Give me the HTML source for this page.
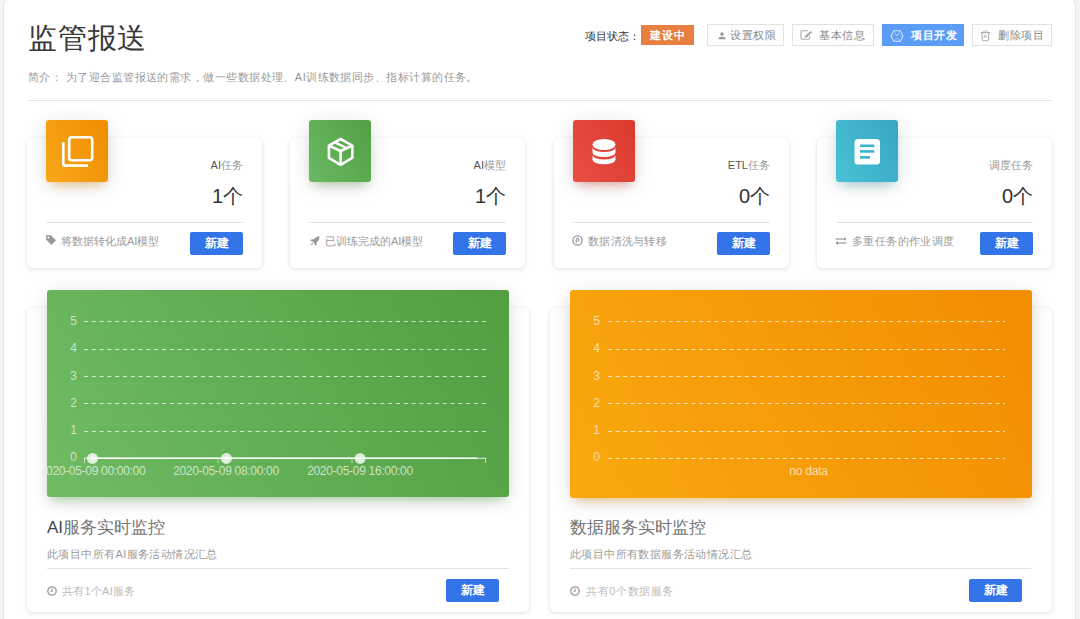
<!DOCTYPE html>
<html><head><meta charset="utf-8">
<style>
*{box-sizing:border-box;margin:0;padding:0}
html,body{width:1080px;height:619px;overflow:hidden;background:#f5f5f5;font-family:"Liberation Sans",sans-serif;color:#333}
.abs{position:absolute}
svg{display:block}
#outer{position:absolute;left:4px;top:-1px;width:1071px;height:640px;background:#fff;border-radius:6px;box-shadow:0 0 0 1px #e6e6e6,0 0 2px rgba(0,0,0,.06)}
.title{left:28px;top:19px;letter-spacing:0.8px;font-size:29px;line-height:38px;color:#383838;white-space:nowrap}
.intro{left:28px;top:69px;letter-spacing:0.45px;font-size:11px;line-height:16px;color:#999;white-space:nowrap}
.hr1{left:28px;top:100px;width:1024px;height:1px;background:#e5e5e5}
.status{left:585px;top:28px;font-size:11px;line-height:16px;color:#333;white-space:nowrap}
.badge{left:641px;top:25px;width:53px;height:20px;background:#e67f40;color:#fff;font-weight:bold;font-size:11px;letter-spacing:0.6px;text-indent:0.6px;line-height:21px;text-align:center}
.btn{top:24px;height:22px;border:1px solid #e2e2e2;background:#fff;color:#888;letter-spacing:0.6px;font-size:11px;line-height:20px;white-space:nowrap}
.btn.blue{background:#5b9cf6;border-color:#5b9cf6;color:#fff;font-weight:bold}
.btn svg{position:absolute}
.btn span{position:absolute;top:0}
.card{background:#fff;border-radius:5px;box-shadow:0 1px 4px rgba(0,0,0,.14)}
.icon{width:62px;height:62px;border-radius:3px}
.icon svg{position:absolute}
.lab{font-size:11px;line-height:14px;color:#999;text-align:right;white-space:nowrap}
.lab b{font-weight:normal;color:#555}
.num{font-size:20px;line-height:24px;color:#333;text-align:right;white-space:nowrap}
.hr{height:1px;background:#e3e3e3}
.foot{font-size:11px;line-height:14px;color:#999;white-space:nowrap}
.nb{width:53px;height:22.6px;background:#3375e8;border-radius:2px;color:#fff;font-weight:bold;font-size:12px;line-height:23px;text-align:center}
.chart{border-radius:3px;overflow:hidden}
.chart svg{position:absolute;left:0;top:0}
.ctitle{font-size:17px;line-height:22px;color:#747474;white-space:nowrap}
.ctitle b{font-weight:normal;color:#3c4858}
.csub{font-size:11px;line-height:14px;color:#9a9a9a;letter-spacing:0.4px;white-space:nowrap}
.fi{position:absolute}
</style></head><body>
<div id="outer"></div>
<div class="abs title">监管报送</div>
<div class="abs intro">简介： 为了迎合监管报送的需求，做一些数据处理、AI训练数据同步、指标计算的任务。</div>
<div class="abs hr1"></div>

<div class="abs status">项目状态：</div>
<div class="abs badge">建设中</div>
<div class="abs btn" style="left:707px;width:77px">
 <svg style="left:10px;top:7px" width="8" height="8" viewBox="0 0 8 8"><circle cx="4" cy="2.1" r="1.8" fill="#999"/><path d="M0.3 7.2 Q0.3 4.8 4 4.8 Q7.7 4.8 7.7 7.2Z" fill="#999"/></svg>
 <span style="left:22px">设置权限</span></div>
<div class="abs btn" style="left:792px;width:82px">
 <svg style="left:7px;top:4px" width="13" height="12" viewBox="0 0 13 12"><path d="M8 1.8H2.2Q1 1.8 1 3V9.1Q1 10.3 2.2 10.3H8.3Q9.5 10.3 9.5 9.1V7.2" fill="none" stroke="#aaa" stroke-width="1.1"/><path d="M4.6 9L5.1 7L10.6 2L12.1 3.5L6.6 8.5Z" fill="#a5a5a5"/></svg>
 <span style="left:26px">基本信息</span></div>
<div class="abs btn blue" style="left:882px;width:82px">
 <svg style="left:7px;top:5px" width="14" height="12" viewBox="0 0 14 12"><path d="M3.8 0.7H10.2L13.2 6L10.2 11.3H3.8L0.8 6Z" fill="none" stroke="#e8f0ff" stroke-width="0.9"/><path d="M3.8 0.7L7 6L10.2 0.7M0.8 6H4.2M13.2 6H9.8M3.8 11.3L5.5 8.6M10.2 11.3L8.5 8.6M5.5 8.6H8.5M4.5 3.6L7 6L9.5 3.6" fill="none" stroke="rgba(235,242,255,.55)" stroke-width="0.8"/></svg>
 <span style="left:28px">项目开发</span></div>
<div class="abs btn" style="left:972px;width:80px">
 <svg style="left:7px;top:5px" width="12" height="12" viewBox="0 0 12 12"><path d="M0.8 2.6H10.4" stroke="#aaa" stroke-width="1.1"/><path d="M3 2.4Q3.2 0.7 5.3 0.7Q7.4 0.7 7.6 2.4" fill="none" stroke="#b5b5b5" stroke-width="0.9"/><path d="M1.9 2.8L2.3 10Q2.4 10.8 3.2 10.8H7.6Q8.4 10.8 8.5 10L8.9 2.8" fill="none" stroke="#aaa" stroke-width="1"/><path d="M4.4 4.6V8M6.2 4.6V8" stroke="#aaa" stroke-width="0.8"/></svg>
 <span style="left:25px">删除项目</span></div>

<!-- stat cards -->
<div class="abs card" style="left:27px;top:138px;width:235px;height:130px"></div>
<div class="abs card" style="left:290px;top:138px;width:235px;height:130px"></div>
<div class="abs card" style="left:554px;top:138px;width:235px;height:130px"></div>
<div class="abs card" style="left:817px;top:138px;width:235px;height:130px"></div>

<div class="abs icon" style="left:46px;top:120px;background:linear-gradient(60deg,#f9a71a,#f08c00);box-shadow:0 4px 20px 0 rgba(0,0,0,.12),0 7px 10px -5px rgba(240,140,0,.4)">
 <svg style="left:14px;top:14px" width="34" height="34" viewBox="0 0 34 34"><rect x="9.2" y="3.3" width="23" height="23" rx="2.5" fill="none" stroke="#fff" stroke-width="2.6"/><path d="M3.3 8.3V30.5Q3.3 31.6 4.4 31.6H28" fill="none" stroke="#fff" stroke-width="2.6"/></svg></div>
<div class="abs icon" style="left:309px;top:120px;background:linear-gradient(60deg,#6ab963,#52a043);box-shadow:0 4px 20px 0 rgba(0,0,0,.12),0 7px 10px -5px rgba(82,160,67,.4)">
 <svg style="left:17px;top:16px" width="30" height="31" viewBox="0 0 30 31"><path d="M14.6 3L26.3 9.6V21.8L14.6 28.8L2.9 21.8V9.6Z" fill="none" stroke="#fff" stroke-width="2.6" stroke-linejoin="round"/><path d="M3.1 9.7L14.6 15L26.1 9.7M14.6 15V28.6" fill="none" stroke="#fff" stroke-width="2.6"/><path d="M8.8 6.3L20.5 12" stroke="#fff" stroke-width="2.5"/></svg></div>
<div class="abs icon" style="left:573px;top:120px;background:linear-gradient(60deg,#e84e45,#da3a2c);box-shadow:0 4px 20px 0 rgba(0,0,0,.12),0 7px 10px -5px rgba(218,58,44,.4)">
 <svg style="left:19px;top:19px" width="24" height="26" viewBox="0 0 24 26"><ellipse cx="12" cy="5.5" rx="11.5" ry="5.5" fill="#fff"/><path d="M0.5 8.6A11.5 4.5 0 0 0 23.5 8.6V13.5A11.5 4.5 0 0 1 0.5 13.5Z" fill="#fff"/><path d="M0.5 16A11.5 4.5 0 0 0 23.5 16V20.7A11.5 4.5 0 0 1 0.5 20.7Z" fill="#fff"/></svg></div>
<div class="abs icon" style="left:836px;top:120px;background:linear-gradient(60deg,#4ac1d5,#34a8c2);box-shadow:0 4px 20px 0 rgba(0,0,0,.12),0 7px 10px -5px rgba(52,168,194,.4)">
 <svg style="left:18px;top:18px" width="27" height="27" viewBox="0 0 27 27"><rect x="0.5" y="0.9" width="25.5" height="25.5" rx="3.5" fill="#fff"/><rect x="6" y="6.5" width="14.3" height="2.6" fill="#3cb3ca"/><rect x="6" y="12.1" width="14.3" height="2.6" fill="#3cb3ca"/><rect x="6" y="18.1" width="10" height="2.6" fill="#3cb3ca"/></svg></div>

<div class="abs lab" style="left:143px;top:158px;width:100px"><b>AI</b>任务</div>
<div class="abs lab" style="left:406px;top:158px;width:100px"><b>AI</b>模型</div>
<div class="abs lab" style="left:670px;top:158px;width:100px"><b>ETL</b>任务</div>
<div class="abs lab" style="left:933px;top:158px;width:100px">调度任务</div>

<div class="abs num" style="left:143px;top:184px;width:100px">1个</div>
<div class="abs num" style="left:406px;top:184px;width:100px">1个</div>
<div class="abs num" style="left:670px;top:184px;width:100px">0个</div>
<div class="abs num" style="left:933px;top:184px;width:100px">0个</div>

<div class="abs hr" style="left:46px;top:222px;width:197px"></div>
<div class="abs hr" style="left:309px;top:222px;width:197px"></div>
<div class="abs hr" style="left:573px;top:222px;width:197px"></div>
<div class="abs hr" style="left:836px;top:222px;width:197px"></div>

<svg class="fi" style="left:46px;top:235px" width="10" height="10" viewBox="0 0 10 10"><path d="M0.3 0.3H4.6L9.7 5.4L5.4 9.7L0.3 4.6Z" fill="#999" stroke="#999" stroke-width="0.6" stroke-linejoin="round"/><circle cx="2.5" cy="2.5" r="1" fill="#fff"/></svg>
<svg class="fi" style="left:310px;top:236px" width="10" height="10" viewBox="0 0 10 10"><path d="M9.7 0.3Q6 0.3 3.8 3.2L1.2 3.4L0.2 5.1L2.5 5.3L4.7 7.5L4.9 9.8L6.6 8.8L6.8 6.2Q9.7 4 9.7 0.3Z" fill="#999"/><path d="M2.3 6.6L0.4 9.6L3.4 7.7Z" fill="#999"/></svg>
<svg class="fi" style="left:572px;top:235px" width="11" height="11" viewBox="0 0 11 11"><circle cx="5.5" cy="5.5" r="4.6" fill="none" stroke="#999" stroke-width="1.3"/><path d="M4.3 8.2V4.6Q4.3 3.4 5.6 3.4Q6.9 3.4 6.9 4.8Q6.9 6.2 5.4 6.2" fill="none" stroke="#999" stroke-width="1.1"/></svg>
<svg class="fi" style="left:835px;top:237px" width="12" height="8" viewBox="0 0 12 8"><path d="M0.5 2H9.5" stroke="#999" stroke-width="1.2"/><path d="M9 0L11.5 2L9 4Z" fill="#999"/><path d="M2.5 6H11.5" stroke="#999" stroke-width="1.2"/><path d="M3 4L0.5 6L3 8Z" fill="#999"/></svg>

<div class="abs foot" style="left:61px;top:234px">将数据转化成AI模型</div>
<div class="abs foot" style="left:325px;top:234px">已训练完成的AI模型</div>
<div class="abs foot" style="left:588px;top:234px;letter-spacing:0.3px">数据清洗与转移</div>
<div class="abs foot" style="left:852px;top:234px;letter-spacing:0.4px">多重任务的作业调度</div>

<div class="abs nb" style="left:190px;top:232px">新建</div>
<div class="abs nb" style="left:453px;top:232px">新建</div>
<div class="abs nb" style="left:717px;top:232px">新建</div>
<div class="abs nb" style="left:980px;top:232px">新建</div>

<!-- chart cards -->
<div class="abs card" style="left:27px;top:308px;width:502px;height:304px"></div>
<div class="abs card" style="left:550px;top:308px;width:502px;height:304px"></div>

<div class="abs chart" style="left:47px;top:290px;width:462px;height:207px;background:linear-gradient(60deg,#70bb64,#519f41);box-shadow:0 4px 20px 0 rgba(0,0,0,.12),0 7px 10px -5px rgba(80,160,70,.4)">
<svg width="462" height="207" viewBox="0 0 462 207" font-family="Liberation Sans" font-size="12">
 <g fill="rgba(255,255,255,.66)" text-anchor="end">
  <text x="30" y="35">5</text><text x="30" y="62.3">4</text><text x="30" y="89.5">3</text><text x="30" y="116.8">2</text><text x="30" y="144">1</text><text x="30" y="171.3">0</text>
 </g>
 <g stroke="rgba(255,255,255,.72)" stroke-width="1" stroke-dasharray="4 3.8">
  <path d="M37 31.5H439M37 59.5H439M37 86.5H439M37 113.5H439M37 141.5H439"/>
 </g>
 <path d="M37 168.3H439" stroke="rgba(255,255,255,.85)" stroke-width="1" fill="none"/>
 <path d="M37.5 168V173M171 168V173M305 168V173M438.5 168V173" stroke="rgba(255,255,255,.6)" stroke-width="1" fill="none"/>
 <g fill="rgba(255,255,255,.78)"><circle cx="45.5" cy="168.4" r="5.5"/><circle cx="179.4" cy="168.4" r="5.5"/><circle cx="313.1" cy="168.4" r="5.5"/></g>
 <path d="M45.5 168.3H430" stroke="#fff" stroke-width="1.6"/>
 <path d="M45.5 165.5V171.5M179.4 165.5V171.5M313.1 165.5V171.5" stroke="rgba(255,255,255,.8)" stroke-width="0.8"/>
 <g fill="rgba(255,255,255,.68)" text-anchor="middle" font-size="12" letter-spacing="-0.3">
  <text x="45.5" y="184.5">2020-05-09 00:00:00</text><text x="179" y="184.5">2020-05-09 08:00:00</text><text x="313" y="184.5">2020-05-09 16:00:00</text>
 </g>
</svg></div>
<div class="abs chart" style="left:570px;top:290px;width:462px;height:208px;background:linear-gradient(60deg,#f9a90e,#f28d00);box-shadow:0 4px 20px 0 rgba(0,0,0,.12),0 7px 10px -5px rgba(240,140,0,.4)">
<svg width="462" height="208" viewBox="0 0 462 208" font-family="Liberation Sans" font-size="12">
 <g fill="rgba(255,255,255,.66)" text-anchor="end">
  <text x="30" y="35">5</text><text x="30" y="62.3">4</text><text x="30" y="89.5">3</text><text x="30" y="116.8">2</text><text x="30" y="144">1</text><text x="30" y="171.3">0</text>
 </g>
 <g stroke="rgba(255,255,255,.72)" stroke-width="1" stroke-dasharray="4 3.6">
  <path d="M38 31.5H435M38 59.5H435M38 86.5H435M38 113.5H435M38 141.5H435M38 168.5H435"/>
 </g>
 <text x="238.5" y="184.7" fill="rgba(255,255,255,.68)" text-anchor="middle" font-size="12" letter-spacing="-0.2">no data</text>
</svg></div>

<div class="abs ctitle" style="left:47px;top:517px"><b>AI</b>服务实时监控</div>
<div class="abs ctitle" style="left:570px;top:517px">数据服务实时监控</div>
<div class="abs csub" style="left:47px;top:547px">此项目中所有AI服务活动情况汇总</div>
<div class="abs csub" style="left:570px;top:547px">此项目中所有数据服务活动情况汇总</div>
<div class="abs hr" style="left:47px;top:568px;width:462px"></div>
<div class="abs hr" style="left:570px;top:568px;width:461px"></div>
<svg class="fi" style="left:47px;top:586px" width="10" height="10" viewBox="0 0 10 10"><circle cx="5" cy="5" r="4.2" fill="none" stroke="#999" stroke-width="1.3"/><path d="M5 2.5V5.5H3.5" fill="none" stroke="#999" stroke-width="1.1"/></svg>
<svg class="fi" style="left:570px;top:586px" width="10" height="10" viewBox="0 0 10 10"><circle cx="5" cy="5" r="4.2" fill="none" stroke="#999" stroke-width="1.3"/><path d="M5 2.5V5.5H3.5" fill="none" stroke="#999" stroke-width="1.1"/></svg>
<div class="abs foot" style="left:62px;top:584px;color:#bbb;letter-spacing:0.25px">共有1个AI服务</div>
<div class="abs foot" style="left:586px;top:584px;color:#bbb;letter-spacing:0.6px">共有0个数据服务</div>
<div class="abs nb" style="left:446px;top:579px">新建</div>
<div class="abs nb" style="left:969px;top:579px">新建</div>
</body></html>
